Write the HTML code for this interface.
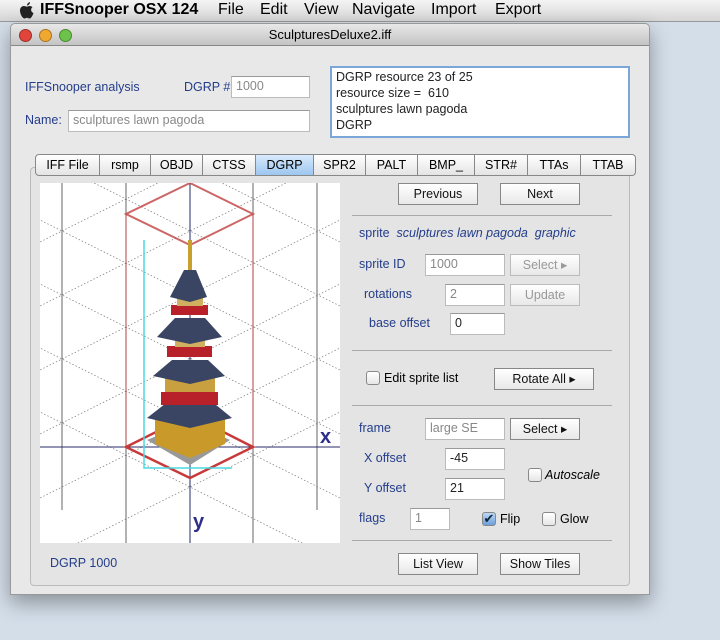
<!DOCTYPE html>
<html><head><meta charset="utf-8"><style>
*{margin:0;padding:0;box-sizing:border-box}
html,body{width:720px;height:640px;overflow:hidden}
body{background:#d4dee9;font-family:"Liberation Sans",sans-serif;font-size:12px;position:relative}
.a{position:absolute}
.menu{left:0;top:0;width:720px;height:22px;background:linear-gradient(#f4f4f4,#d6d6d6);border-bottom:1px solid #999;font-size:16px}
.menu span{position:absolute;top:1px}
.win{left:10px;top:23px;width:640px;height:572px;background:#e8e8e8;border:1px solid #999;border-radius:5px 5px 0 0;box-shadow:0 8px 20px rgba(0,0,0,.35)}
.title{left:0;top:0;width:638px;height:22px;background:linear-gradient(#e8e8e8,#c4c4c4);border-bottom:1px solid #888;border-radius:5px 5px 0 0;text-align:center;font-size:13px;line-height:22px}
.dot{width:13px;height:13px;border-radius:50%;top:5px;border:1px solid rgba(0,0,0,.3)}
.lbl{color:#243d8a;font-size:12.5px}
.fld{background:#fff;border:1px solid #bbb;border-top-color:#999;font-size:12.5px;padding:2px 4px;color:#222}
.g{color:#888}
.btn{background:linear-gradient(#fff,#e8e8e8);border:1px solid #888;text-align:center;font-size:12.5px;line-height:20px;color:#111}
.dis{color:#999;border-color:#bbb}
.sep{height:1px;background:#aaa;left:352px;width:260px}
.tab{top:154px;height:22px;border:1px solid #888;border-left:none;background:linear-gradient(#fff,#e4e4e4);text-align:center;line-height:20px;font-size:12.5px}
.cb{width:14px;height:14px;border:1px solid #888;border-radius:3px;background:linear-gradient(#fff,#e6e6e6)}
</style></head><body>
<div class="a menu">
<svg class="a" style="left:20px;top:2px" width="15" height="17" viewBox="0 0 15 17"><path d="M10 0C10 2 8.5 3.5 7 3.5C7 2 8.5 0.3 10 0ZM7.5 4.5C9 3.8 11 3.5 12.5 5.3C10.5 6.5 10.5 10 13.5 11C12.5 14 11 16.5 9.5 16.5C8.3 16.5 8 15.8 7 15.8C6 15.8 5.5 16.5 4.5 16.5C2.5 16.5 0 12 0 8.5C0 5 2.5 4 4 4C5.5 4 6.5 5 7.5 4.5Z" fill="#222"/></svg>
<span style="left:40px;font-weight:bold">IFFSnooper OSX 124</span>
<span style="left:218px">File</span><span style="left:260px">Edit</span><span style="left:304px">View</span><span style="left:352px">Navigate</span><span style="left:431px">Import</span><span style="left:495px">Export</span>
</div>
<div class="a win">
<div class="a title">SculpturesDeluxe2.iff</div>
<div class="a dot" style="left:8px;background:#e0443a"></div>
<div class="a dot" style="left:28px;background:#f0a830"></div>
<div class="a dot" style="left:48px;background:#6cc24a"></div>
</div>
<div class="a lbl" style="left:25px;top:80px">IFFSnooper analysis</div>
<div class="a lbl" style="left:184px;top:80px">DGRP #</div>
<div class="a fld g" style="left:231px;top:76px;width:79px;height:22px">1000</div>
<div class="a lbl" style="left:25px;top:113px">Name:</div>
<div class="a fld g" style="left:68px;top:110px;width:242px;height:22px">sculptures lawn pagoda</div>
<div class="a fld" style="left:330px;top:66px;width:300px;height:72px;border:2px solid #7aa6d8;line-height:16px;padding:1px 4px">DGRP resource 23 of 25<br>resource size =&nbsp; 610<br>sculptures lawn pagoda<br>DGRP</div>
<div class="a" style="left:30px;top:167px;width:600px;height:419px;border:1px solid #bbb;border-radius:4px;background:#e4e4e4"></div>
<div class="a tab" style="left:35px;width:65px;border-left:1px solid #888;border-radius:4px 0 0 4px">IFF File</div>
<div class="a tab" style="left:100px;width:51px">rsmp</div>
<div class="a tab" style="left:151px;width:52px">OBJD</div>
<div class="a tab" style="left:203px;width:53px">CTSS</div>
<div class="a tab" style="left:256px;width:58px;background:linear-gradient(#d8eafc,#9cc6f0)">DGRP</div>
<div class="a tab" style="left:314px;width:52px">SPR2</div>
<div class="a tab" style="left:366px;width:52px">PALT</div>
<div class="a tab" style="left:418px;width:57px">BMP_</div>
<div class="a tab" style="left:475px;width:53px">STR#</div>
<div class="a tab" style="left:528px;width:53px">TTAs</div>
<div class="a tab" style="left:581px;width:55px;border-radius:0 4px 4px 0">TTAB</div>
<svg class="a" style="left:40px;top:183px" width="300" height="360" viewBox="40 183 300 360">
<rect x="40" y="183" width="300" height="360" fill="#fff"/>
<defs><clipPath id="c"><rect x="40" y="183" width="300" height="360"/></clipPath></defs>
<g clip-path="url(#c)" stroke="#777" stroke-width="0.7" stroke-dasharray="1.5 2" fill="none">
<path d="M-200 100 L600 500 M-200 164 L600 564 M-200 228 L600 628 M-200 292 L600 692 M-200 36 L600 436 M-200 -28 L600 372 M-200 -92 L600 308 M-200 -156 L600 244 M-200 -220 L600 180 M-200 -284 L600 116"/>
<path d="M580 100 L-220 500 M580 164 L-220 564 M580 228 L-220 628 M580 292 L-220 692 M580 36 L-220 436 M580 -28 L-220 372 M580 -92 L-220 308 M580 -156 L-220 244 M580 -220 L-220 180 M580 -284 L-220 116"/>
</g>
<g stroke="#666" stroke-width="1"><path d="M62 183V510M126 183V543M253 183V543M317 183V510"/></g>
<path d="M190 183V543M40 447H340" stroke="#2a2a6a" stroke-width="1"/>
<path d="M126 214V447M253 214V447" stroke="#b04040" stroke-width="1"/>
<path d="M190 183L253 214L190 245L126 214Z" stroke="#c04040" stroke-width="2" fill="none" opacity=".8"/>
<path d="M190 415L253 447L190 478L126 447Z" stroke="#c83a3a" stroke-width="2.5" fill="none"/>
<path d="M144 240V468H232" stroke="#4ad8e0" stroke-width="1.5" fill="none"/>
<g>
<path d="M188 240h4v30h-4z" fill="#c8a030"/>
<path d="M147 440L190 422L230 440L190 465Z" fill="#999"/>
<path d="M155 418h70v26l-35 14l-35-14z" fill="#c99a2a"/>
<path d="M147 418L170 400H210L232 418L190 428Z" fill="#3a4564"/>
<path d="M161 392h57v13h-57z" fill="#b8202a"/>
<path d="M165 376h50v16h-50z" fill="#c8a040"/>
<path d="M153 376L172 360H208L225 376L190 384Z" fill="#3a4564"/>
<path d="M167 346h45v11h-45z" fill="#b8202a"/>
<path d="M175 337h30v10h-30z" fill="#d0b060"/>
<path d="M157 337L175 318H205L222 337L190 344Z" fill="#3a4564"/>
<path d="M171 305h37v10h-37z" fill="#b8202a"/>
<path d="M177 297h26v9h-26z" fill="#d0b060"/>
<path d="M170 297L184 270H196L207 297L190 302Z" fill="#3a4564"/>
</g>
<text x="320" y="443" font-family="Liberation Sans" font-weight="bold" font-size="20" fill="#2e2e8a">x</text>
<text x="193" y="528" font-family="Liberation Sans" font-weight="bold" font-size="20" fill="#2e2e8a">y</text>
</svg>
<div class="a lbl" style="left:50px;top:556px">DGRP 1000</div>
<div class="a btn" style="left:398px;top:183px;width:80px;height:22px">Previous</div>
<div class="a btn" style="left:500px;top:183px;width:80px;height:22px">Next</div>
<div class="a sep" style="top:215px"></div>
<div class="a lbl" style="left:359px;top:226px">sprite&nbsp; <i>sculptures lawn pagoda&nbsp; graphic</i></div>
<div class="a lbl" style="left:359px;top:257px">sprite ID</div>
<div class="a fld g" style="left:425px;top:254px;width:80px;height:22px">1000</div>
<div class="a btn dis" style="left:510px;top:254px;width:70px;height:22px">Select &#9656;</div>
<div class="a lbl" style="left:364px;top:287px">rotations</div>
<div class="a fld g" style="left:445px;top:284px;width:60px;height:22px">2</div>
<div class="a btn dis" style="left:510px;top:284px;width:70px;height:22px">Update</div>
<div class="a lbl" style="left:369px;top:316px">base offset</div>
<div class="a fld" style="left:450px;top:313px;width:55px;height:22px">0</div>
<div class="a sep" style="top:350px"></div>
<div class="a cb" style="left:366px;top:371px"></div>
<div class="a" style="left:384px;top:371px;font-size:12.5px">Edit sprite list</div>
<div class="a btn" style="left:494px;top:368px;width:100px;height:22px">Rotate All &#9656;</div>
<div class="a sep" style="top:405px"></div>
<div class="a lbl" style="left:359px;top:421px">frame</div>
<div class="a fld g" style="left:425px;top:418px;width:80px;height:22px">large SE</div>
<div class="a btn" style="left:510px;top:418px;width:70px;height:22px">Select &#9656;</div>
<div class="a lbl" style="left:364px;top:451px">X offset</div>
<div class="a fld" style="left:445px;top:448px;width:60px;height:22px">-45</div>
<div class="a cb" style="left:528px;top:468px"></div>
<div class="a" style="left:545px;top:468px;font-size:12.5px;font-style:italic">Autoscale</div>
<div class="a lbl" style="left:364px;top:481px">Y offset</div>
<div class="a fld" style="left:445px;top:478px;width:60px;height:22px">21</div>
<div class="a lbl" style="left:359px;top:511px">flags</div>
<div class="a fld g" style="left:410px;top:508px;width:40px;height:22px">1</div>
<div class="a cb" style="left:482px;top:512px;background:linear-gradient(#bcd8f6,#6aa0dc);color:#123;font-size:13px;line-height:11px;text-align:center">&#10004;</div>
<div class="a" style="left:500px;top:512px;font-size:12.5px">Flip</div>
<div class="a cb" style="left:542px;top:512px"></div>
<div class="a" style="left:560px;top:512px;font-size:12.5px">Glow</div>
<div class="a sep" style="top:540px"></div>
<div class="a btn" style="left:398px;top:553px;width:80px;height:22px">List View</div>
<div class="a btn" style="left:500px;top:553px;width:80px;height:22px">Show Tiles</div>
</body></html>
